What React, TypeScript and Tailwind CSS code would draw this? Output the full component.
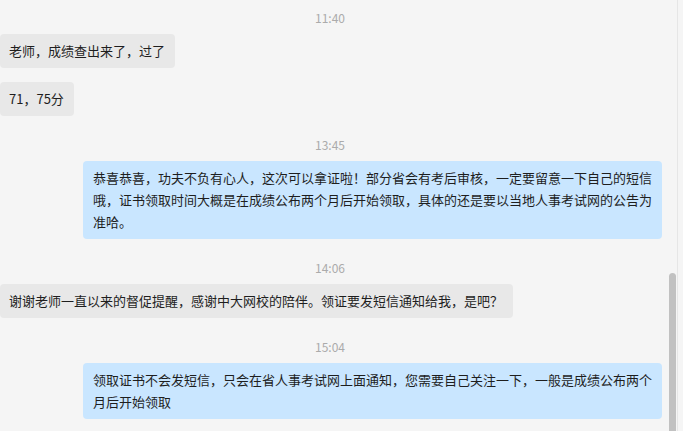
import React from "react";

const font = { fontFamily: '"Noto Sans CJK SC", "Noto Sans", sans-serif' };

function Time({ t, first }: { t: string; first?: boolean }) {
  return (
    <div
      className={`${first ? "mt-[10px]" : "mt-[21px]"} mb-2 h-4 pr-[9px] text-center text-[12px] leading-4 text-[#ababab]`}
    >
      {t}
    </div>
  );
}

function Left({ children }: { children: React.ReactNode }) {
  return (
    <div className="flex">
      <div className="rounded-[4px] bg-[#e8e8e8] py-[6px] pl-[9px] pr-[10px] text-[13px] leading-[22px] text-[#1e1e1e]">
        {children}
      </div>
    </div>
  );
}

function Right({ children }: { children: React.ReactNode }) {
  return (
    <div className="flex justify-end pr-[7px]">
      <div className="max-w-[579px] rounded-[4px] bg-[#c9e6ff] py-[6px] pl-[10px] pr-[10px] text-[13px] leading-[22px] text-[#1e1e1e]">
        {children}
      </div>
    </div>
  );
}

export default function App() {
  return (
    <div className="flex h-[431px] w-[683px] overflow-hidden bg-[#f5f5f5]" style={font}>
      <div className="flex w-[669px] flex-col">
        <Time t="11:40" first />
        <div className="flex flex-col gap-[14px]">
          <Left>老师，成绩查出来了，过了</Left>
          <Left>71，75分</Left>
        </div>
        <Time t="13:45" />
        <Right>
          恭喜恭喜，功夫不负有心人，这次可以拿证啦！部分省会有考后审核，一定要留意一下自己的短信哦，证书领取时间大概是在成绩公布两个月后开始领取，具体的还是要以当地人事考试网的公告为准哈。
        </Right>
        <Time t="14:06" />
        <Left>谢谢老师一直以来的督促提醒，感谢中大网校的陪伴。领证要发短信通知给我，是吧？</Left>
        <Time t="15:04" />
        <Right>
          领取证书不会发短信，只会在省人事考试网上面通知，您需要自己关注一下，一般是成绩公布两个月后开始领取
        </Right>
      </div>
      <div className="flex w-[8px] flex-col">
        <div className="h-[273px] shrink-0" />
        <div className="w-[7px] flex-1 rounded-t-[4px] bg-[#c1c1c1]" />
      </div>
      <div className="w-px bg-[#e6e6e6]" />
      <div className="flex-1" />
    </div>
  );
}
